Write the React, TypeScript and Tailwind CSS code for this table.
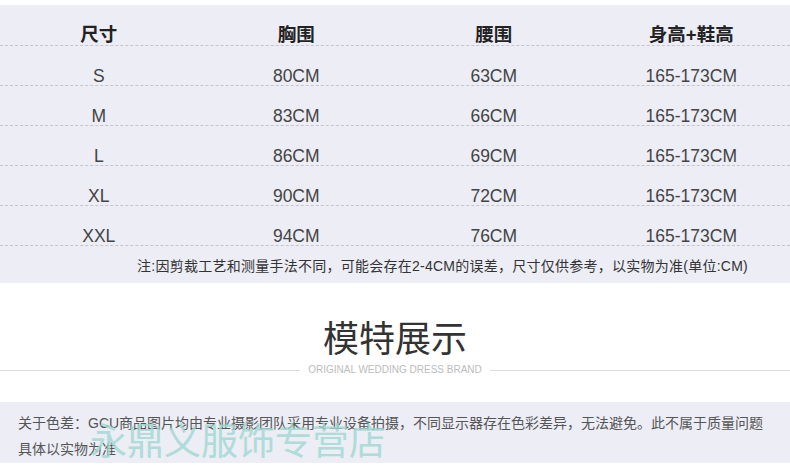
import React from "react";

const rows = [
  { size: "S", bust: "80CM", waist: "63CM", height: "165-173CM" },
  { size: "M", bust: "83CM", waist: "66CM", height: "165-173CM" },
  { size: "L", bust: "86CM", waist: "69CM", height: "165-173CM" },
  { size: "XL", bust: "90CM", waist: "72CM", height: "165-173CM" },
  { size: "XXL", bust: "94CM", waist: "76CM", height: "165-173CM" },
];

const font = "font-['Liberation_Sans','Noto_Sans_CJK_SC',sans-serif]";

export default function App() {
  return (
    <div className={`w-[790px] h-[476px] bg-white overflow-hidden ${font}`}>
      <div className="h-[5px]" />
      <div className="bg-[#ecedf5] h-[278px]">
        <div className="grid grid-cols-4 h-[41px] border-b border-dashed border-[#c4c4ca] text-[18.5px] leading-[21px] font-semibold text-[#222] items-center pt-[19px]">
          <div className="text-center">尺寸</div>
          <div className="text-center">胸围</div>
          <div className="text-center">腰围</div>
          <div className="text-center">身高+鞋高</div>
        </div>
        {rows.map((r) => (
          <div
            key={r.size}
            className="grid grid-cols-4 h-[40px] border-b border-dashed border-[#c4c4ca] text-[17.5px] leading-[22px] text-[#444] items-center pt-[19px]"
          >
            <div className="text-center">{r.size}</div>
            <div className="text-center">{r.bust}</div>
            <div className="text-center">{r.waist}</div>
            <div className="text-center">{r.height}</div>
          </div>
        ))}
        <div className="flex justify-end pr-[42px] pt-[10px] text-[14px] leading-[20px] tracking-[0.25px] text-[#333]">
          注:因剪裁工艺和测量手法不同，可能会存在2-4CM的误差，尺寸仅供参考，以实物为准(单位:CM)
        </div>
      </div>

      <div className="flex flex-col items-center pt-[37px]">
        <div className="text-[36px] leading-[40px] text-[#333]">模特展示</div>
        <div className="flex items-center w-full mt-[3px]">
          <div className="flex-1 h-px bg-[#dcdcdc]" />
          <div className="px-[8px] text-[10px] leading-[14px] text-[#bcbcbc]">
            ORIGINAL WEDDING DRESS BRAND
          </div>
          <div className="flex-1 h-px bg-[#dcdcdc]" />
        </div>
      </div>

      <div className="relative mt-[25px] bg-[#ecedf5] h-[61px] px-[18px] pt-[8px] text-[14px] leading-[26px] text-[#555]">
        <div className="whitespace-nowrap">关于色差：GCU商品图片均由专业摄影团队采用专业设备拍摄，不同显示器存在色彩差异，无法避免。此不属于质量问题</div>
        <div>具体以实物为准</div>
        <div className="absolute left-[90px] top-[19px] text-[37px] leading-[44px] text-[#9fd8d1] opacity-80 whitespace-nowrap">
          永鼎义服饰专营店
        </div>
      </div>
    </div>
  );
}
